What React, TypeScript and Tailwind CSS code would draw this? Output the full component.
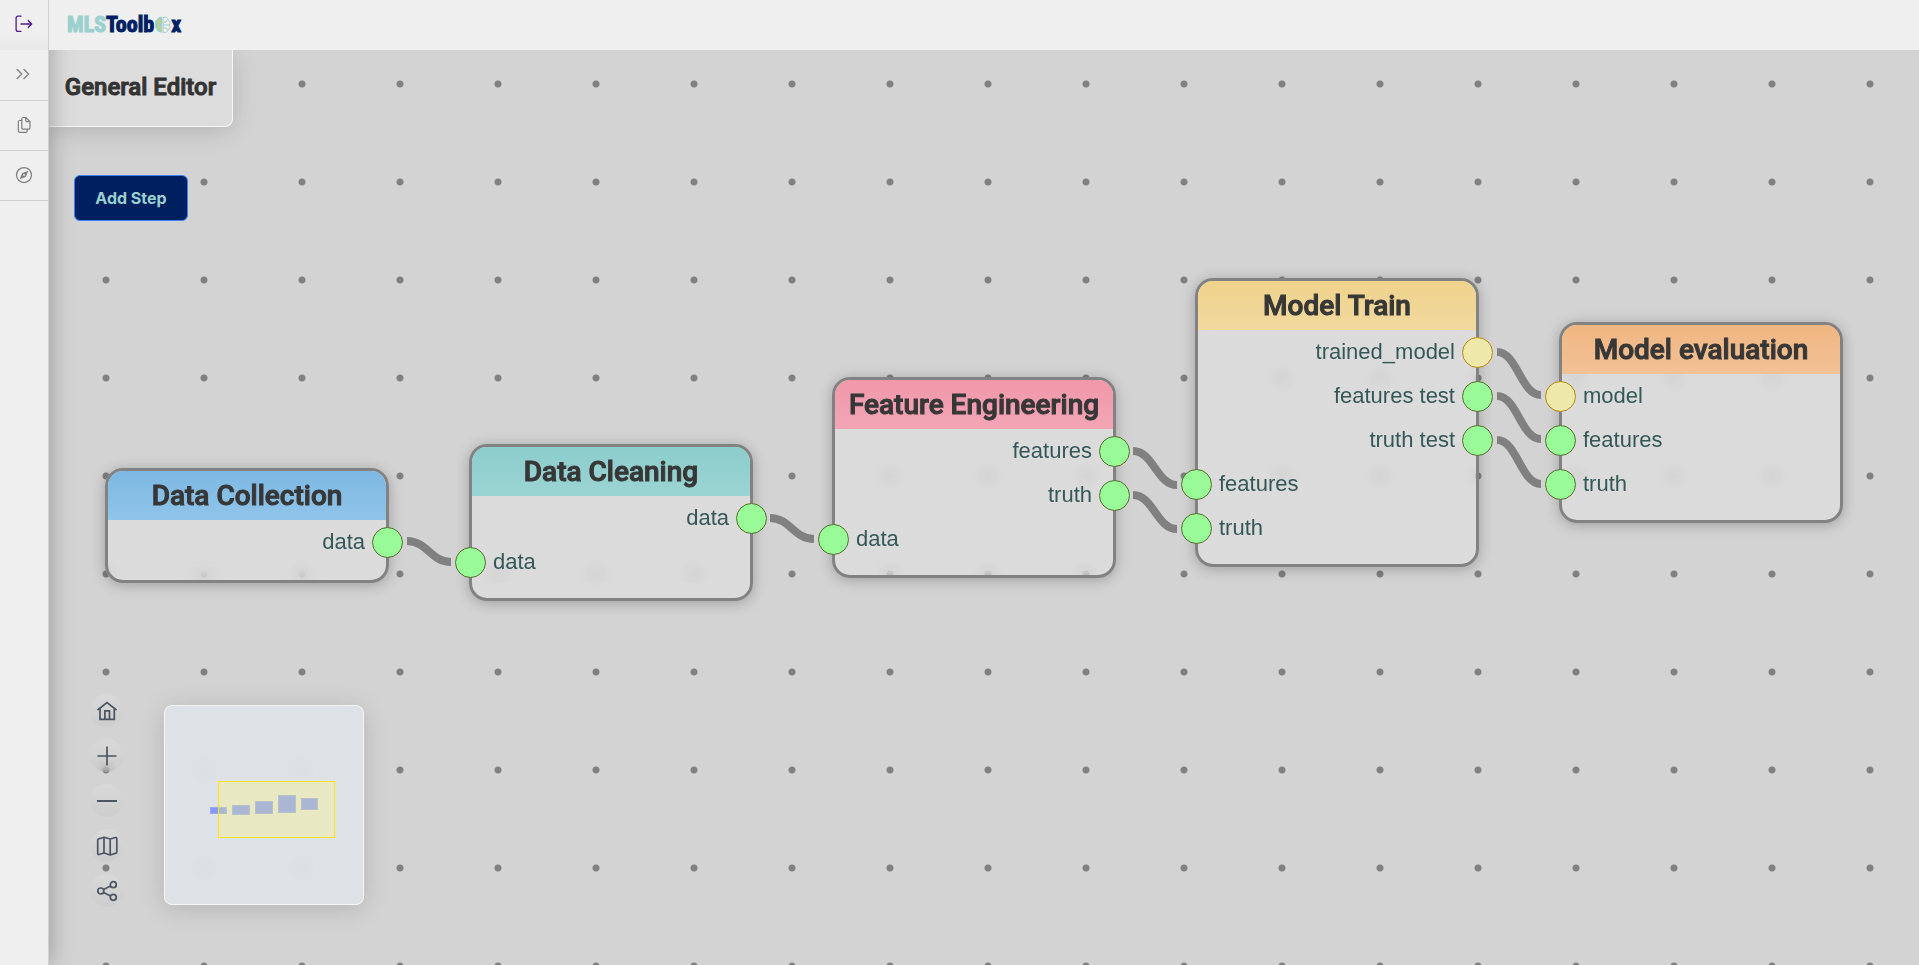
import type { ReactNode } from "react";
import { IoCompassOutline } from "react-icons/io5";

type Kind = "data" | "model";
type Port = { label: string; kind: Kind };
type Step = {
  title: string;
  place: string;
  head: string;
  outputs: Port[];
  inputs: Port[];
};

const data = (label: string): Port => ({ label, kind: "data" });
const model = (label: string): Port => ({ label, kind: "model" });

const steps: Step[] = [
  {
    title: "Data Collection",
    place: "left-[56px] top-[418px]",
    head: "from-[#7db8e2] to-[#90c4ea]",
    outputs: [data("data")],
    inputs: [],
  },
  {
    title: "Data Cleaning",
    place: "left-[420px] top-[394px]",
    head: "from-[#8bcdcc] to-[#9bd4d3]",
    outputs: [data("data")],
    inputs: [data("data")],
  },
  {
    title: "Feature Engineering",
    place: "left-[783px] top-[327px]",
    head: "from-[#f098aa] to-[#f2a5b6]",
    outputs: [data("features"), data("truth")],
    inputs: [data("data")],
  },
  {
    title: "Model Train",
    place: "left-[1146px] top-[228px]",
    head: "from-[#efd28c] to-[#f1d99e]",
    outputs: [model("trained_model"), data("features test"), data("truth test")],
    inputs: [data("features"), data("truth")],
  },
  {
    title: "Model evaluation",
    place: "left-[1510px] top-[272px]",
    head: "from-[#f0b681] to-[#f2c197]",
    outputs: [],
    inputs: [model("model"), data("features"), data("truth")],
  },
];

const links = [
  [358, 491, 512],
  [721, 468, 489],
  [1084, 401, 435],
  [1084, 445, 479],
  [1448, 302, 345],
  [1448, 346, 389],
  [1448, 390, 434],
];

const portColors: Record<Kind, string> = {
  data: "bg-[#98fb98] border-[#556b2f]",
  model: "bg-[#eee8aa] border-[#b8860b]",
};

function PortRow({ port, side }: { port: Port; side: "in" | "out" }) {
  return (
    <li
      className={`flex h-11 items-center gap-[7px] ${
        side === "out" ? "-mr-[17px] flex-row-reverse" : "-ml-[17px]"
      }`}
    >
      <button
        type="button"
        aria-label={`${port.label} ${side}`}
        className={`size-[31px] shrink-0 rounded-full border ${portColors[port.kind]}`}
      />
      <span className="text-[22px] leading-6 text-[#365757]">{port.label}</span>
    </li>
  );
}

function StepNode({ step }: { step: Step }) {
  return (
    <section
      className={`absolute ${step.place} min-h-[115px] w-[284px] rounded-[18px] border-3 border-[#828282] bg-white/20 pb-3.5 font-['Liberation_Sans',sans-serif] shadow-[0_2px_14px_rgba(0,0,0,0.25)] backdrop-blur-[8px]`}
    >
      <h2
        className={`flex h-[49px] items-center justify-center whitespace-nowrap rounded-t-[15px] bg-linear-to-b ${step.head} font-[Roboto,sans-serif] text-[28px] font-medium text-[#373737] [-webkit-text-stroke:1px_#373737]`}
      >
        {step.title}
      </h2>
      <ul>
        {step.outputs.map((p) => (
          <PortRow key={p.label} port={p} side="out" />
        ))}
        {step.inputs.map((p) => (
          <PortRow key={p.label} port={p} side="in" />
        ))}
      </ul>
    </section>
  );
}

function Stroke({ children, className }: { children: ReactNode; className: string }) {
  return (
    <svg
      viewBox="0 0 24 24"
      fill="none"
      stroke="currentColor"
      strokeWidth="1.7"
      aria-hidden="true"
      className={className}
    >
      {children}
    </svg>
  );
}

const tools: { label: string; art: ReactNode }[] = [
  {
    label: "Home",
    art: <path d="M2.5 11 12 3.5 21.5 11M5 9.4v10.9h14.3V9.4M9.9 20.3v-8.5h4.6v8.5" />,
  },
  { label: "Zoom in", art: <path d="M12 2.5v19M2.5 12h19" /> },
  { label: "Zoom out", art: <path d="M2 12h20" strokeWidth="2" /> },
  {
    label: "Mini map",
    art: (
      <path
        strokeLinejoin="round"
        d="M9 3.2 3.4 5a1 1 0 0 0-.7 1v13.6a1 1 0 0 0 1.3.9L9 19l6.2 2 5.9-1.9a1 1 0 0 0 .7-1V4.5a1 1 0 0 0-1.3-1L15.2 5 9 3.2V19M15.2 5v16"
      />
    ),
  },
  {
    label: "Arrange",
    art: (
      <>
        <circle cx="5.8" cy="12" r="3" />
        <circle cx="18.3" cy="5.7" r="3" />
        <circle cx="18.3" cy="18.3" r="3" />
        <path d="m8.500 10.600 7.100-3.600M8.500 13.400l7.100 3.600" />
      </>
    ),
  },
];

const miniNodes = [
  "left-[45px] top-[101px] w-[17px] h-[7px]",
  "left-[67px] top-[99px] w-[18px] h-[10px]",
  "left-[90px] top-[95px] w-[18px] h-[13px]",
  "left-[113px] top-[89px] w-[18px] h-[18px]",
  "left-[136px] top-[92px] w-[17px] h-[12px]",
];

function Logo() {
  return (
    <a
      href="#"
      aria-label="MLSToolbox"
      className="flex items-center font-['Liberation_Sans_Narrow','Roboto_Condensed','Liberation_Sans',sans-serif] text-[22px] leading-6 font-bold"
    >
      <span className="text-[#9bd0cf] [-webkit-text-stroke:1px_#9bd0cf]">MLS</span>
      <span className="text-[#001f62] [-webkit-text-stroke:1px_#001f62]">Toolb</span>
      <svg viewBox="0 0 17 18" className="h-[18px] w-[17px]" aria-hidden="true" fill="none">
        <path
          d="M8 .8C5.500.200 3.600 1.600 3.300 3.300 1.300 4.200.800 6 1.300 7.400c-1 1.700-.6 4 .9 5.100.2 2.500 2.600 4.200 5.800 4.100Z"
          fill="#9bd0cf"
        />
        <path
          d="M9 1v16M9 2c3-2 5 0 5 2 2 1 2.500 3 1.500 5 1 2 0 4-1.500 5-1 3-4 3-5 2M9 6h3l1-2M9 9h6M9 12h3l1.500 2"
          stroke="#9bd0cf"
          strokeWidth="1"
        />
        <path d="M3.500 4.500 6 7 3 9.500 6 12l-2 2M6 3v4m0 5 1.500 3" stroke="#e3cf3c" strokeWidth="1" />
      </svg>
      <span className="text-[#001f62] [-webkit-text-stroke:1px_#001f62]">x</span>
    </a>
  );
}

export default function App() {
  return (
    <div className="flex h-screen overflow-hidden bg-[#efefef] font-[Inter,sans-serif]">
      <nav className="relative z-20 flex w-[49px] shrink-0 flex-col border-r border-[#d0d0d0] bg-[#efefef] shadow-[0_0_24px_rgba(0,0,0,0.3)]">
        <a
          href="#"
          aria-label="Log out"
          className="flex h-[50px] items-center justify-center bg-linear-to-b from-[#efefef] from-60% to-[#e9e9e9] pb-0.5 text-[#551a8b]"
        >
          <svg
            viewBox="0 0 18 18"
            fill="none"
            stroke="currentColor"
            strokeWidth="1.3"
            strokeLinecap="round"
            strokeLinejoin="round"
            className="size-[18px]"
            aria-hidden="true"
          >
            <path d="M6 1.200H3A1.900 1.900 0 0 0 1.100 3.100v11.300A1.900 1.900 0 0 0 3 16.300h3M6 9h10.500M13.200 5.500 16.700 9l-3.500 3.500" />
          </svg>
        </a>
        <button
          type="button"
          aria-label="Expand"
          className="flex h-[51px] items-center justify-center border-b border-[#d0d0d0] pb-0.5 text-[#858585]"
        >
          <Stroke className="size-[18px]">
            <path
              strokeWidth="2"
              strokeLinecap="round"
              strokeLinejoin="round"
              d="m3 6 6 6-6 6M12 6l6 6-6 6"
            />
          </Stroke>
        </button>
        <button
          type="button"
          aria-label="Documents"
          className="flex h-[50px] items-center justify-center border-b border-[#d0d0d0] pb-0.5 text-[#808080]"
        >
          <svg
            viewBox="0 0 18 18"
            fill="none"
            stroke="currentColor"
            strokeWidth="1.2"
            strokeLinejoin="round"
            className="size-[18px]"
            aria-hidden="true"
          >
            <path d="M10.800 1.500H8.300a1.500 1.500 0 0 0-1.500 1.500v8.700a1.500 1.500 0 0 0 1.500 1.500h5.200a1.500 1.500 0 0 0 1.500-1.500V5.700ZM10.800 1.500v3a1.200 1.200 0 0 0 1.200 1.200h3M6.800 4.500H4.800A1.500 1.500 0 0 0 3.300 6v8.700a1.700 1.700 0 0 0 1.700 1.700h5.600a1.500 1.500 0 0 0 1.500-1.500v-1.700" />
          </svg>
        </button>
        <button
          type="button"
          aria-label="Explore"
          className="flex h-[50px] items-center justify-center border-b border-[#d0d0d0] pb-0.5 text-[#808080]"
        >
          <IoCompassOutline className="size-5" />
        </button>
      </nav>

      <div className="flex min-w-0 flex-1 flex-col">
        <header className="relative z-30 flex h-[50px] shrink-0 items-center bg-[#efefef] px-[18px]">
          <Logo />
        </header>

        <main className="relative flex-1 overflow-hidden bg-[#d3d3d3] bg-[radial-gradient(circle,#808080_3px,transparent_4px)] bg-size-[98px_98px] bg-position-[8px_-15px]">
          <svg className="absolute inset-0 size-full" fill="none" aria-hidden="true">
            {links.map(([x, y1, y2]) => (
              <path
                key={`${x}-${y1}`}
                d={`M${x} ${y1}C${x + 20} ${y1} ${x + 24} ${y2} ${x + 44} ${y2}`}
                stroke="#808080"
                strokeWidth="8"
              />
            ))}
          </svg>

          {steps.map((s) => (
            <StepNode key={s.title} step={s} />
          ))}

          <div className="relative flex w-[184px] items-center justify-center rounded-br-lg border-r border-b border-[#f7f7f7] bg-[#dcdcdc] pt-[21px] pb-[22px] shadow-[0_4px_24px_rgba(0,0,0,0.15)]">
            <h1 className="font-[Roboto,sans-serif] text-2xl leading-[33px] font-medium whitespace-nowrap text-[#333] [-webkit-text-stroke:1px_#333]">
              General Editor
            </h1>
          </div>

          <button
            type="button"
            className="relative mt-12 ml-[25px] h-[46px] w-[114px] rounded-md border border-[#3b82f6] bg-[#001f5f] text-base font-bold text-[#9bd0cf]"
          >
            Add Step
          </button>

          <div className="absolute bottom-[58px] left-[41px] flex flex-col gap-3">
            {tools.map((t) => (
              <button
                key={t.label}
                type="button"
                aria-label={t.label}
                className="flex size-[33px] items-center justify-center rounded-full bg-linear-to-b from-white/15 to-black/2 text-[#4b5563] backdrop-blur-[5px]"
              >
                <Stroke className="size-6">{t.art}</Stroke>
              </button>
            ))}
          </div>

          <div className="absolute bottom-[60px] left-[115px] size-[200px] rounded-lg border border-[#f4f5f6] bg-[#e2e7ee]/75 shadow-[0_4px_24px_rgba(0,0,0,0.15)] backdrop-blur-[8px]">
            {miniNodes.map((place) => (
              <span
                key={place}
                className={`absolute ${place} border border-[#9aa8ee] bg-[#8799ff]`}
              />
            ))}
            <span className="absolute top-[75px] left-[53px] h-[57px] w-[117px] border border-[#ffe41f] bg-[#fffc71]/30" />
          </div>
        </main>
      </div>
    </div>
  );
}
